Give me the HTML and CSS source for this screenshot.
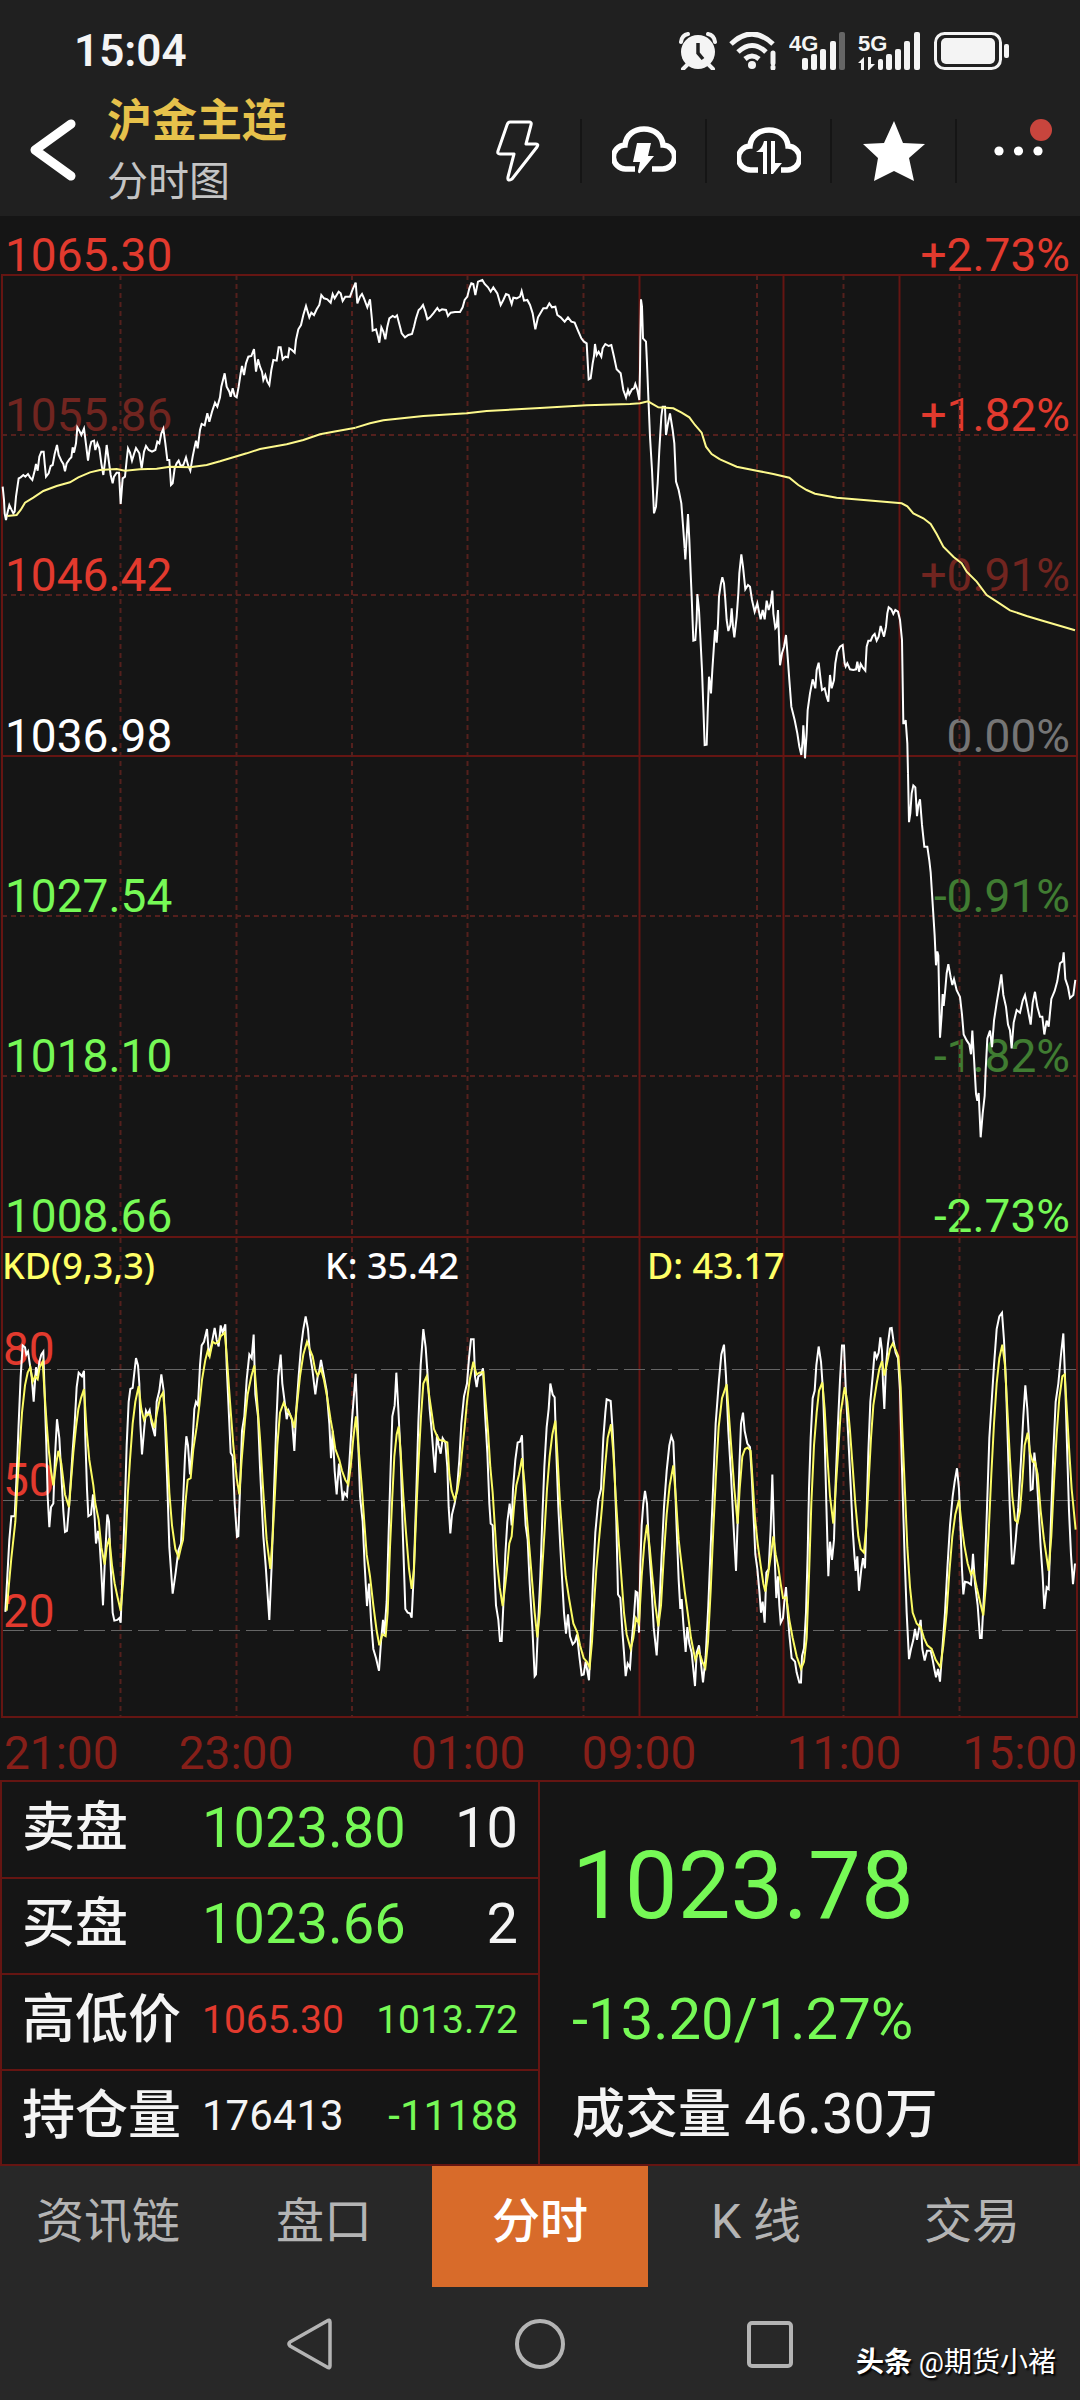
FILE: index.html
```html
<!DOCTYPE html>
<html lang="zh-CN">
<head>
<meta charset="utf-8">
<meta name="viewport" content="width=device-width, initial-scale=1">
<title>沪金主连 分时图</title>
<link rel="stylesheet" href="styles.css">
</head>
<body>
<div class="app">
  <header class="header">
    <div class="status">
      <time class="clock">15:04</time>
      <div class="status-icons">
        <svg width="38" height="38" viewBox="0 0 38 38" aria-label="闹钟">
          <g fill="none" stroke="#f4f4f4" stroke-width="4" stroke-linecap="round"><path d="M2 10Q3 3 9 2M36 10Q35 3 29 2M8 33l-4 4M30 33l4 4"/></g>
          <circle cx="19" cy="20" r="17" fill="#f4f4f4"/>
          <path d="M19 11v10l5 6" fill="none" stroke="#202020" stroke-width="3.5"/>
        </svg>
        <svg width="48" height="38" viewBox="0 0 48 38" aria-label="无线网络">
          <g fill="none" stroke="#f4f4f4" stroke-width="5"><path d="M2 12Q23-8 44 12M9 20Q23 7 37 20M16 27Q23 21 30 27"/></g>
          <circle cx="23" cy="33" r="4" fill="#f4f4f4"/>
          <path d="M44 21v10M44 35v1" stroke="#f4f4f4" stroke-width="5" stroke-linecap="round"/>
        </svg>
        <svg width="57" height="38" viewBox="0 0 57 38" aria-label="4G">
          <text class="net" x="0" y="19">4G</text>
          <g fill="#f4f4f4"><rect x="13" y="26" width="6" height="12" rx="2"/><rect x="22" y="22" width="6" height="16" rx="2"/><rect x="31" y="17" width="6" height="21" rx="2"/><rect x="41" y="9" width="6" height="29" rx="2"/></g>
          <rect x="50" y="0" width="6" height="38" rx="2" fill="#666"/>
        </svg>
        <svg width="64" height="38" viewBox="0 0 64 38" aria-label="5G">
          <text class="net" x="0" y="19">5G</text>
          <g fill="#f4f4f4"><path d="M6 25v13H3v-7H0zM10 25v13h1l6-6h-4v-7z"/><rect x="20" y="27" width="5" height="11" rx="2"/><rect x="28" y="22" width="6" height="16" rx="2"/><rect x="37" y="17" width="6" height="21" rx="2"/><rect x="46" y="9" width="6" height="29" rx="2"/><rect x="56" y="0" width="6" height="38" rx="2"/></g>
        </svg>
        <svg width="76" height="38" viewBox="0 0 76 38" aria-label="电池">
          <rect x="1.5" y="1.5" width="65" height="35" rx="9" fill="none" stroke="#f4f4f4" stroke-width="3"/>
          <rect x="7" y="6" width="54" height="26" rx="5" fill="#f4f4f4"/>
          <rect x="70" y="12" width="5" height="14" rx="2" fill="#f4f4f4"/>
        </svg>
      </div>
    </div>
    <div class="toolbar">
      <button class="back" type="button" aria-label="返回">
        <svg width="48" height="64" viewBox="0 0 48 64"><path d="M42 6L6 32L42 58" fill="none" stroke="#fff" stroke-width="9" stroke-linecap="round" stroke-linejoin="round"/></svg>
      </button>
      <div class="titles">
        <h1>沪金主连</h1>
        <p>分时图</p>
      </div>
      <div class="actions">
        <button type="button" aria-label="闪电">
          <svg width="44" height="64" viewBox="0 0 44 64"><path d="M14 3H33Q36 3 35 6L30 25H40Q43 25 41 28L16 60Q11 63 12 58L18 35H4Q1 35 2 32L11 6Q12 3 14 3Z" fill="none" stroke="#fff" stroke-width="3" stroke-linejoin="round"/></svg>
        </button>
        <button type="button" aria-label="闪电下单">
          <svg width="64" height="50" viewBox="0 0 64 50"><path d="M23 43H14A12 12 0 0 1 13 19C14 9 22 3 32 3S50 9 51 19A12 12 0 0 1 50 43H40" fill="none" stroke="#fff" stroke-width="5.5"/><path d="M25 17H39L36 30H42L28 47Q26 48 26 45L28 36H21Z" fill="#fff"/></svg>
        </button>
        <button type="button" aria-label="云条件单">
          <svg width="64" height="50" viewBox="0 0 64 50"><path d="M21 44H14A12 12 0 0 1 13 20C14 10 22 4 32 4S50 10 51 20A12 12 0 0 1 50 44H44" fill="none" stroke="#fff" stroke-width="5.5"/><path d="M27 15H30V48H26V26H19Q25 23 27 15ZM34 15H38V37H45L36 48H34Z" fill="#fff"/></svg>
        </button>
        <button type="button" aria-label="自选">
          <svg width="64" height="62" viewBox="0 0 64 62"><path d="M32 1L41 23L63 24L47 38L52 61L32 51L12 61L16 38L1 24L22 23Z" fill="#fff"/></svg>
        </button>
        <button class="more" type="button" aria-label="更多">
          <svg width="50" height="10" viewBox="0 0 50 10"><g fill="#fff"><circle cx="5" cy="5" r="4.6"/><circle cx="24.5" cy="5" r="4.6"/><circle cx="44" cy="5" r="4.6"/></g></svg>
          <span class="badge"></span>
        </button>
      </div>
    </div>
  </header>

  <main>
    <svg class="chart" viewBox="0 216 1080 1564" role="img" aria-label="分时走势图">
      <g class="axis red">
        <text x="5" y="271">1065.30</text><text x="5" y="431" class="dim">1055.86</text><text x="5" y="591">1046.42</text>
      </g>
      <text class="axis white" x="5" y="752">1036.98</text>
      <g class="axis green"><text x="5" y="912">1027.54</text><text x="5" y="1072">1018.10</text><text x="5" y="1232">1008.66</text></g>
      <g class="axis red end"><text x="1070" y="271">+2.73%</text><text x="1070" y="431">+1.82%</text><text x="1070" y="591" class="dim">+0.91%</text></g>
      <text class="axis grey end" x="1070" y="752">0.00%</text>
      <g class="axis green end"><text x="1070" y="912" class="dim">-0.91%</text><text x="1070" y="1072" class="dim">-1.82%</text><text x="1070" y="1232">-2.73%</text></g>
      <g class="axis red"><text x="3" y="1365">80</text><text x="3" y="1496">50</text><text x="3" y="1627">20</text></g>

      <g class="frame"><path d="M2 275H1077V1717H2ZM2 756H1077M2 1237H1077M639.5 275V1717M783.5 275V1717M899.5 275V1717"/></g>
      <path class="grid" d="M2 435H1077M2 595H1077M2 916H1077M2 1076H1077M120.5 275V1717M236.5 275V1717M352 275V1717M467.5 275V1717M583.5 275V1717M757 275V1717M843.5 275V1717M959.5 275V1717"/>
      <path class="level" d="M3 1369.5H1076M3 1500.5H1076M3 1630.5H1076"/>

      <g class="plot price">
        <polyline transform="translate(0 230) scale(.33333)" points="8,770 12,810 14,850 18,870 22,850 28,825 34,838 40,850 44,845 48,800 56,745 62,742 70,735 76,740 84,732 90,742 97,750 104,722 108,702 113,722 118,680 124,665 131,665 134,700 138,740 146,730 152,708 158,705 164,672 171,645 176,675 184,692 190,702 195,724 200,700 208,688 214,682 218,652 222,668 228,640 232,592 238,602 244,615 252,596 257,635 264,692 270,650 274,635 282,632 286,660 292,640 298,655 304,700 310,735 315,695 320,645 326,690 332,735 338,760 342,740 350,728 357,728 362,822 368,745 375,740 380,690 384,655 390,668 396,692 402,672 408,654 418,670 425,715 432,665 438,648 446,660 456,665 466,660 472,635 478,640 484,610 490,596 496,640 502,690 508,690 513,765 518,760 524,715 530,700 536,692 542,708 550,705 558,682 564,705 571,722 578,680 583,655 588,632 593,655 600,600 605,582 614,586 622,550 628,575 636,545 645,518 652,530 660,502 664,470 674,430 680,470 688,485 692,500 698,475 704,498 710,502 716,470 722,430 726,408 732,435 738,400 745,380 754,378 762,357 768,425 774,388 780,410 786,425 790,450 796,435 802,455 808,465 814,420 820,390 830,392 836,352 842,352 848,388 856,380 864,382 868,355 876,360 884,368 888,330 895,298 903,285 910,255 918,228 928,262 934,248 942,255 950,238 958,225 964,195 972,205 982,208 992,218 998,192 1004,205 1016,185 1022,190 1028,213 1036,200 1050,200 1058,178 1067,158"/>
        <polyline transform="translate(340 230) scale(.33333)" points="47,158 52,220 60,200 66,192 72,205 82,232 90,208 96,270 98,302 108,298 114,320 118,338 124,292 130,305 136,328 142,290 148,265 158,258 165,262 171,256 180,290 185,310 195,322 205,315 216,312 222,290 228,265 236,240 242,235 249,225 256,245 262,268 270,262 280,250 292,234 298,243 306,238 318,240 324,258 332,248 345,246 360,246 368,232 374,210 382,200 388,175 394,160 400,162 406,195 414,155 427,150 434,162 444,172 452,185 460,172 472,190 482,225 490,210 498,192 506,195 515,222 520,203 530,205 540,200 545,183 552,212 562,210 570,225 578,250 586,298 594,262 602,248 610,235 620,235 628,220 636,232 646,230 652,255 662,262 674,275 684,262 694,275 704,278 714,302 724,325 732,335 740,340 746,448 752,445 758,400 762,378 765,342 770,375 776,365 784,380 788,355 796,342 806,348 814,345 822,380 830,418 842,430 850,480 858,502 864,480 868,493 876,478 882,475 886,462 892,480 898,510 900,420 901,330 903,208 906,230 909,325 918,335 921,400 925,500 930,620 936,720 942,850 948,830 953,760 958,660 964,560 968,530 975,530 978,615 984,580 990,550 998,600 1003,640 1008,755 1016,780 1024,820 1030,900 1034,955"/>
        <polyline transform="translate(620 380) scale(.33333)" points="194,505 196,538 204,402 208,480 212,580 215,650 220,782 226,780 230,720 232,642 237,690 241,770 246,870 250,980 254,1095 260,1094 263,1000 267,890 270,910 273,940 277,870 281,810 285,750 290,788 294,730 297,650 302,615 307,592 312,610 316,660 320,720 325,753 331,735 335,685 339,740 343,772 350,710 355,640 358,580 364,523 369,560 376,628 384,615 390,620 396,660 404,695 412,670 418,700 422,718 428,690 434,718 440,662 446,690 452,670 457,632 460,700 466,745 470,740 474,690 477,770 480,856 486,820 492,800 498,765 503,830 508,900 514,980 524,1020 532,1060 538,1100 544,1125 548,1080 550,1036 553,1085 555,1135 560,1060 563,990 570,940 578,898 586,925 590,870 596,848 602,900 606,930 614,925 620,950 625,965 630,885 635,925 642,900 646,850 652,815 660,800 668,795 674,850 677,860 682,850 690,868 700,870 708,868 712,845 717,875 722,852 728,862 736,872 740,800 745,782 752,782 758,768 764,762 770,782 776,770 782,738 792,770 798,740 802,700 806,682 814,688 820,702 826,690 834,695 840,720 846,780 850,1030 854,1030 857,1020 862,1090 864,1180"/>
        <polyline transform="translate(860 560) scale(.33333 .39541)" points="144,539 147,663 151,640 155,590 160,570 166,575 171,648 175,620 180,605 186,670 193,725 202,725 208,760 212,790 218,870 224,950 228,1025 232,990 235,1000 240,1208 245,1150 248,1098 251,1128 256,1085 260,1045 265,1022 272,1055 277,1075 282,1060 290,1088 300,1105 306,1150 311,1200 320,1215 328,1225 333,1250 337,1190 342,1260 348,1350 352,1368 356,1348 362,1460 368,1400 374,1355 377,1290 382,1210 390,1190 396,1232 402,1165 410,1120 418,1080 424,1048 430,1100 438,1130 444,1175 450,1190 455,1235 461,1170 470,1138 480,1145 488,1115 495,1100 502,1130 512,1175 518,1120 525,1092 532,1130 540,1155 547,1155 553,1200 560,1165 566,1180 574,1110 584,1090 592,1065 600,1020 608,1015 611,992 616,1060 624,1080 630,1108 640,1100 646,1062"/>
      </g>
      <g class="plot average">
        <polyline transform="translate(0 230) scale(.33333)" points="22,858 50,855 62,840 75,818 100,803 130,783 170,768 210,757 235,742 270,727 300,720 350,717 375,722 420,718 470,716 510,710 570,712 620,705 660,694 700,682 740,670 780,657 860,643 910,630 960,613 1000,605 1067,593"/>
        <polyline transform="translate(340 230) scale(.33333)" points="47,593 90,580 130,571 250,558 380,550 440,543 600,534 740,526 870,522 900,520 924,514 955,532 1000,535 1025,548 1048,562 1065,585 1085,608 1098,650 1115,672 1140,688"/>
        <polyline transform="translate(620 380) scale(.33333)" points="300,238 350,260 410,272 460,282 508,293 535,315 560,330 585,341 650,353 740,361 845,370 862,379 880,400 910,415 932,432 950,462 970,500 1000,530 1025,550 1040,575 1070,605 1100,645 1135,668 1170,691 1220,708 1260,720 1365,751"/>
      </g>

      <g class="plot line-k">
        <polyline transform="translate(0 1220) scale(.33333 .36352)" points="16,1078 22,980 28,880 34,815 44,815 50,700 56,560 62,430 68,345 75,350 79,370 84,362 90,400 95,430 101,500 108,405 113,430 118,390 124,370 130,362 134,480 139,620 143,760 148,845 153,790 160,780 165,650 171,548 178,600 184,700 190,800 195,858 201,855 207,790 212,720 218,635 224,560 230,460 236,420 241,425 246,430 252,415 256,600 261,740 265,815 273,810 279,755 284,820 288,890 294,855 299,890 303,950 309,1060 314,950 319,860 322,810 327,830 332,950 338,1080 343,1102 352,1100 358,1095 362,1108 368,960 374,800 380,620 386,500 391,465 398,462 403,420 408,380 414,400 418,450 421,560 426,645 433,570 438,525 443,535 449,523 455,560 465,595 470,500 478,470 484,425 491,470 496,580 502,730 508,900 518,1028 527,970 535,910 543,890 549,780 555,650 559,595 564,620 570,700 577,620 583,520 588,500 594,510 600,400 605,345 612,335 621,300 627,375 635,340 644,297 650,330 656,348 662,290 668,310 676,287 680,400 686,520 692,640 698,650 704,780 711,872 715,870 720,740 726,580 733,540 740,440 748,370 755,380 761,315 766,480 774,540 780,680 790,870 797,950 808,1100 815,950 822,750 829,560 835,430 842,370 847,450 854,500 860,548 866,525 876,550 883,635 889,520 896,430 903,350 910,300 917,265 924,300 930,370 937,410 946,480 953,430 957,420 963,385 972,430 980,470 988,560 993,655 998,580 1004,690 1010,755 1017,670 1023,720 1028,772 1033,750 1041,760 1048,670 1056,550 1067,423 1073,560 1080,760 1088,830 1094,950 1101,1062 1107,1000 1113,1100 1120,1180 1128,1205 1137,1240"/>
        <polyline transform="translate(360 1220) scale(.33333 .36352)" points="57,1240 63,1160 69,1100 73,1140 80,1050 86,860 92,680 97,540 104,510 109,420 115,520 122,650 128,850 136,1070 143,1080 150,1082 155,1094 161,980 168,780 175,560 182,400 190,300 197,350 203,430 209,520 215,580 220,640 225,695 231,590 236,620 242,643 248,600 256,612 262,680 266,790 271,862 276,810 284,780 291,740 298,660 304,560 312,485 321,450 327,380 333,328 341,328 345,430 350,460 355,430 363,425 369,408 375,530 382,640 388,780 392,835 398,840 403,960 408,1060 415,1100 420,1158 425,1158 430,1060 436,920 442,830 449,780 455,840 459,740 466,660 473,612 480,610 486,592 491,740 497,840 503,880 509,1000 517,1120 524,1255 528,1250 535,1100 541,980 547,820 553,680 560,570 566,520 571,450 578,480 584,488 589,640 595,790 601,900 607,1000 612,1080 618,1138 624,1085 630,1145 638,1167 645,1160 651,1140 658,1200 665,1252 671,1250 677,1215 682,1240 687,1266 693,1130 699,990 706,860 715,770 723,740 730,600 736,530 740,493 752,498 758,580 764,700 769,830 774,1030 781,1040 787,1130 792,1190 797,1255 803,1220 810,1232 816,1150 822,1090 827,1022 832,1025 837,1135 841,950 845,840 850,780 855,745 861,780 866,880 874,1000 881,1120 890,1198 897,1090 904,940 912,790 920,690 928,620 934,595 940,610 945,720 950,850 956,990 961,1070 965,1043 970,1110 977,1188 982,1120 988,1165 995,1190 1005,1282 1010,1190 1017,1170 1023,1220 1029,1272 1037,1200 1045,1060 1052,900 1060,720 1067,560 1077,440 1084,370 1092,343 1098,430 1105,580 1113,700 1120,830 1128,965"/>
        <polyline transform="translate(700 1220) scale(.33333 .36352)" points="108,965 113,830 118,680 123,560 129,530 134,580 142,615 150,625 155,700 161,820 166,920 172,960 178,1020 183,1080 188,1050 194,1108 199,970 206,960 212,850 217,700 221,830 225,950 229,1040 234,980 238,1060 242,1108 249,1095 253,1050 258,1010 263,1080 268,1140 275,1205 285,1215 290,1245 298,1272 303,1272 306,1200 312,1178 318,1080 323,920 327,740 332,600 338,490 344,470 349,400 356,348 363,390 369,470 374,600 379,780 385,980 390,885 396,935 402,880 407,720 413,580 420,440 426,345 432,345 438,480 445,600 452,730 458,850 463,920 467,965 472,925 477,1020 484,960 489,930 495,958 500,800 505,640 511,500 518,430 524,362 530,380 536,365 541,323 546,360 549,450 553,520 558,400 564,340 570,298 575,297 580,330 587,365 594,380 600,470 604,620 609,780 614,930 620,1080 627,1208 633,1180 640,1155 645,1125 651,1155 656,1130 662,1100 667,1180 674,1212 681,1185 692,1185 698,1210 703,1235 708,1258 714,1235 720,1270 727,1180 735,1080 742,960 750,840 758,760 764,720 771,683 777,740 782,860 786,960 790,1030 795,995 804,997 813,1003 819,918 825,1000 833,1060 840,1150 845,1150 852,1030 860,820 868,600 875,500 882,400 890,300 898,265 906,255 912,330 918,450 923,600 929,780 936,945 940,945 947,880 955,790 963,660 970,540 976,455 982,520 988,620 992,743 998,740 1003,640 1009,690 1015,780 1022,900 1028,980 1033,1070 1040,1010 1046,1015 1052,850 1060,640 1067,500 1075,450 1083,370 1090,312 1095,430 1101,620 1107,800 1113,920 1119,1002 1125,945"/>
      </g>
      <g class="plot line-d">
        <polyline transform="translate(0 1220) scale(.33333 .36352)" points="20,1075 28,990 34,930 40,880 46,830 52,730 58,640 66,530 75,455 83,420 91,405 98,445 105,430 113,438 119,405 128,390 134,480 140,560 146,630 153,690 160,730 167,680 175,635 184,670 195,755 207,790 213,720 220,640 228,570 235,520 243,490 252,465 260,580 268,660 280,730 286,780 296,825 304,900 314,948 320,900 328,875 336,950 344,1000 352,1035 362,1075 369,1000 376,900 383,760 390,660 398,560 406,500 416,457 424,520 432,550 440,535 450,535 463,572 471,530 480,490 489,475 496,540 502,640 508,750 516,840 526,905 536,928 543,900 549,880 556,780 563,715 572,710 580,630 590,570 598,510 606,440 616,385 623,360 629,375 638,335 646,340 656,335 662,320 674,310 680,370 690,500 700,620 710,710 718,755 725,660 735,550 743,480 754,430 763,400 770,480 780,600 790,750 800,880 811,960 818,870 825,750 832,620 840,530 851,503 860,520 870,535 877,550 883,572 892,500 900,430 910,370 921,335 929,355 938,375 945,410 953,428 963,410 972,440 982,490 992,550 998,580 1006,630 1018,660 1026,690 1036,715 1045,728 1052,680 1060,600 1068,540 1075,620 1085,730 1092,820 1100,920 1110,980 1120,1060 1130,1130 1138,1170"/>
        <polyline transform="translate(360 1220) scale(.33333 .36352)" points="58,1170 67,1140 77,1145 83,1080 90,900 96,780 103,650 110,590 116,568 122,640 130,760 138,860 147,960 155,1015 162,960 169,800 176,660 183,540 190,450 200,430 207,480 215,530 222,575 230,592 238,605 250,607 262,612 268,700 275,745 284,770 292,745 300,700 307,630 314,570 321,500 329,440 340,390 345,410 350,425 358,420 370,418 377,500 384,580 391,680 398,750 405,850 411,940 419,1010 428,1062 435,1010 441,960 448,890 455,870 462,790 469,730 477,700 486,655 494,730 500,810 508,900 516,990 524,1080 532,1148 539,1080 546,970 554,850 561,740 569,650 577,590 586,552 593,660 600,780 608,880 617,980 627,1040 640,1110 652,1135 660,1170 671,1205 680,1215 689,1230 696,1160 702,1060 709,960 718,870 726,790 735,680 743,600 753,562 760,640 767,760 775,870 784,980 792,1080 800,1140 812,1180 820,1150 828,1095 837,1110 845,980 853,890 861,838 869,900 877,980 886,1060 895,1118 903,1060 911,930 920,810 929,730 940,675 948,770 956,880 965,950 974,1020 983,1080 993,1150 1006,1210 1016,1185 1027,1215 1036,1232 1044,1160 1052,1020 1060,850 1068,700 1076,570 1086,490 1100,452 1107,540 1115,640 1123,740 1133,835"/>
        <polyline transform="translate(700 1220) scale(.33333 .36352)" points="113,835 119,740 127,650 135,630 143,626 152,635 158,720 165,820 173,890 182,950 190,1000 196,1022 205,970 213,920 220,870 227,920 235,955 242,1000 249,1040 259,1038 268,1100 278,1150 290,1200 303,1235 312,1215 320,1150 327,980 334,780 342,620 350,530 357,470 367,447 374,520 382,650 390,760 400,835 407,740 415,630 422,530 434,460 442,500 450,580 458,680 466,780 475,870 482,905 492,915 499,840 506,720 513,600 520,510 530,450 538,410 546,388 553,428 562,390 570,355 578,340 586,355 595,375 602,460 608,600 615,750 622,900 630,1010 638,1080 650,1110 662,1120 672,1150 682,1170 695,1180 707,1210 721,1230 730,1170 740,1080 748,970 757,870 766,810 777,770 785,840 793,895 803,945 813,975 820,965 830,1010 840,1050 850,1088 858,1000 866,860 874,700 882,560 890,450 898,380 907,343 915,400 922,520 930,660 937,760 945,825 953,832 960,800 967,720 974,620 983,585 990,640 998,665 1005,665 1013,700 1022,800 1032,880 1046,965 1054,870 1062,720 1070,590 1078,490 1087,430 1094,425 1101,530 1108,640 1115,740 1127,852"/>
      </g>

      <g class="legend">
        <text class="yellow" x="2" y="1279">KD(9,3,3)</text>
        <text class="white" x="325" y="1279">K: 35.42</text>
        <text class="yellow" x="647" y="1279">D: 43.17</text>
      </g>
      <g class="axis time">
        <text x="4" y="1769">21:00</text>
        <text class="mid" x="236" y="1769">23:00</text>
        <text class="mid" x="468" y="1769">01:00</text>
        <text class="mid" x="639" y="1769">09:00</text>
        <text class="mid" x="844" y="1769">11:00</text>
        <text class="end" x="1077" y="1769">15:00</text>
      </g>
    </svg>

    <section class="quote">
      <table class="book">
        <colgroup><col class="c-label"><col class="c-value"><col></colgroup>
        <tbody>
          <tr><th scope="row">卖盘</th><td class="green">1023.80</td><td>10</td></tr>
          <tr><th scope="row">买盘</th><td class="green">1023.66</td><td>2</td></tr>
          <tr class="small"><th scope="row">高低价</th><td class="red">1065.30</td><td class="green">1013.72</td></tr>
          <tr class="medium"><th scope="row">持仓量</th><td>176413</td><td class="green">-11188</td></tr>
        </tbody>
      </table>
      <div class="last">
        <strong class="last-price">1023.78</strong>
        <span class="last-change">-13.20/1.27%</span>
        <span class="volume">成交量 <span class="volume-value">46.30</span>万</span>
      </div>
    </section>
  </main>

  <nav class="tabs">
    <a href="#news">资讯链</a>
    <a href="#depth">盘口</a>
    <a href="#minute" class="active" aria-current="page">分时</a>
    <a href="#kline">K 线</a>
    <a href="#trade">交易</a>
  </nav>
  <footer class="system">
    <button type="button" aria-label="返回"><svg width="50" height="54" viewBox="0 0 50 54"><path d="M42 4Q45 2 45 5V49Q45 52 42 50L5 29Q3 27 5 25Z" fill="none" stroke="#b4b4b4" stroke-width="3.5" stroke-linejoin="round"/></svg></button>
    <button type="button" aria-label="主页"><svg width="50" height="54" viewBox="0 0 50 54"><circle cx="25" cy="27" r="23" fill="none" stroke="#b4b4b4" stroke-width="4"/></svg></button>
    <button type="button" aria-label="最近任务"><svg width="50" height="54" viewBox="0 0 50 54"><rect x="4" y="6" width="42" height="43" rx="3" fill="none" stroke="#b4b4b4" stroke-width="4"/></svg></button>
    <p class="watermark"><b>头条</b> @期货小褚</p>
  </footer>
</div>
</body>
</html>
```
FILE: styles.css
```css
:root {
  --bg: #151515;
  --header: #202020;
  --bar: #282828;
  --line: #651512;
  --red: #e23a2e;
  --green: #76f956;
  --white: #f4f4f4;
  --yellow: #ffff66;
}

* { box-sizing: border-box; }

body {
  margin: 0;
  background: var(--bar);
  color: var(--white);
  font-family: Roboto, "Noto Sans CJK SC", sans-serif;
}

h1, p { margin: 0; }

svg { display: block; }

button {
  padding: 0;
  border: 0;
  background: none;
}

.app { background: var(--bg); }

.green { color: var(--green); fill: var(--green); }
.red { color: var(--red); fill: var(--red); }
.white { fill: #fff; }
.yellow { fill: var(--yellow); }
.grey { fill: #757575; }

/* header */
.header { background: var(--header); }

.status {
  display: flex;
  justify-content: space-between;
  align-items: center;
  height: 84px;
  padding: 18px 70px 0 74px;
}

.clock { font-size: 44px; font-weight: 600; }

.status-icons { display: flex; gap: 12px; }

.net {
  fill: var(--white);
  font: 700 22px "Liberation Sans", sans-serif;
}

.toolbar {
  display: flex;
  height: 132px;
}

.back {
  width: 107px;
  padding: 0 0 0 29px;
}

.titles {
  flex: 1;
  padding-top: 8px;
  white-space: nowrap;
}

.titles h1 {
  color: #e6c14b;
  font-size: 45px;
  font-weight: 700;
  line-height: 60px;
}

.titles p {
  color: #c4c4c4;
  font-size: 41px;
  font-weight: 400;
  line-height: 60px;
}

.actions {
  display: flex;
  align-items: center;
  padding-top: 2px;
}

.actions button {
  display: flex;
  justify-content: center;
  align-items: center;
  width: 125px;
  height: 64px;
  border-left: 2px solid #151515;
}

.actions button:first-child { border-left: 0; }

.more { position: relative; }

.badge {
  position: absolute;
  top: 0;
  right: 28px;
  width: 22px;
  height: 22px;
  border-radius: 50%;
  background: #c8453d;
}

/* chart */
.chart { width: 100%; height: auto; }

.axis { font-size: 46px; }
.end { text-anchor: end; }
.mid { text-anchor: middle; }
.time { fill: #861f19; }
.dim { opacity: .45; }

.legend { font: 500 36px "Noto Sans", sans-serif; }

.frame, .grid, .level, .plot {
  fill: none;
  stroke-width: 2;
}

.frame { stroke: var(--line); }
.grid { stroke: #54201d; stroke-dasharray: 5 4; }
.level { stroke: #666; stroke-width: 1; stroke-dasharray: 21 6; }

.plot polyline { vector-effect: non-scaling-stroke; }
.price { stroke: #fff; }
.average { stroke: #fdf98c; }
.line-k { stroke: #fff; }
.line-d { stroke: #fbfb62; }

/* quote panel */
.quote {
  display: grid;
  grid-template-columns: 1fr 1fr;
  border: 2px solid var(--line);
}

.book {
  width: 100%;
  border-collapse: collapse;
  table-layout: fixed;
  border-right: 2px solid var(--line);
}

.c-label { width: 200px; }
.c-value { width: 160px; }

.book tr { height: 96px; border-bottom: 2px solid var(--line); }
.book tr:last-child { height: 94px; border-bottom: 0; }

.book th {
  padding: 0 0 4px 20px;
  font-size: 53px;
  font-weight: 500;
  line-height: 76px;
  text-align: left;
  white-space: nowrap;
}

.book td {
  padding: 0 0 4px;
  font-size: 56px;
  line-height: 76px;
  white-space: nowrap;
}

.book td:last-child { padding-right: 20px; text-align: right; }
.book .small td { font-size: 39px; }
.book .medium td { font-size: 42px; }

.last {
  display: flex;
  flex-direction: column;
  padding: 36px 0 0 32px;
  white-space: nowrap;
}

.last-price {
  color: var(--green);
  font-size: 94px;
  font-weight: 400;
  line-height: 136px;
}

.last-change {
  color: var(--green);
  font-size: 58px;
  line-height: 130px;
}

.volume { font-size: 53px; font-weight: 500; line-height: 60px; }
.volume-value { font-size: 56px; font-weight: 400; }

/* bottom bars */
.tabs {
  display: grid;
  grid-template-columns: repeat(5, 1fr);
  background: var(--bar);
}

.tabs a {
  height: 121px;
  color: #b4b4b4;
  font-size: 48px;
  font-weight: 400;
  line-height: 112px;
  text-align: center;
  text-decoration: none;
}

.tabs .active {
  background: #d86b2a;
  color: #fff;
  font-weight: 500;
}

.system {
  position: relative;
  display: flex;
  justify-content: center;
  align-items: center;
  gap: 180px;
  height: 114px;
  background: var(--bar);
}

.watermark {
  position: absolute;
  right: 24px;
  bottom: 18px;
  color: #fff;
  font-size: 28px;
  line-height: 40px;
  text-shadow: 2px 2px 2px #000;
}
```
